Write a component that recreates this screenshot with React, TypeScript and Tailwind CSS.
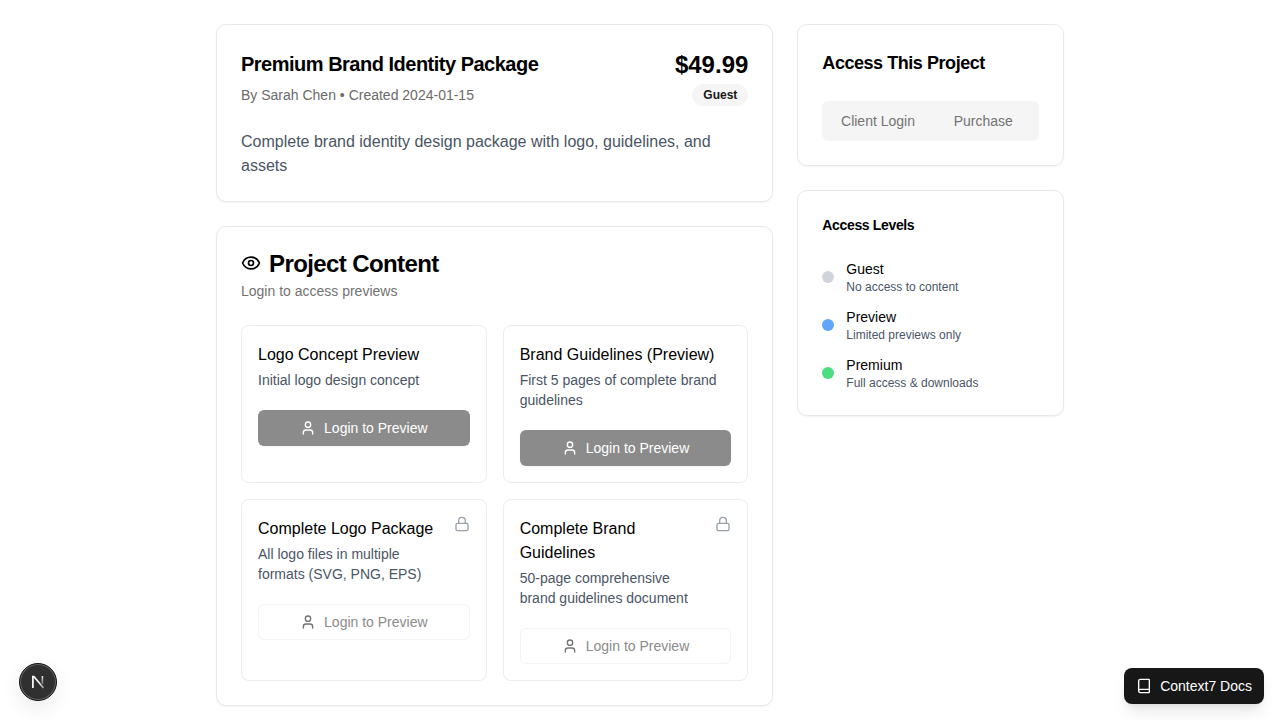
import React from 'react';
import { Book, Eye, Lock, User } from 'lucide-react';

const items = [
  { title: 'Logo Concept Preview', desc: 'Initial logo design concept', locked: false },
  { title: 'Brand Guidelines (Preview)', desc: 'First 5 pages of complete brand guidelines', locked: false },
  { title: 'Complete Logo Package', desc: 'All logo files in multiple formats (SVG, PNG, EPS)', locked: true },
  { title: 'Complete Brand Guidelines', desc: '50-page comprehensive brand guidelines document', locked: true },
];

const levels = [
  { name: 'Guest', desc: 'No access to content', dot: 'bg-[#d1d5db]' },
  { name: 'Preview', desc: 'Limited previews only', dot: 'bg-[#60a5fa]' },
  { name: 'Premium', desc: 'Full access & downloads', dot: 'bg-[#4ade80]' },
];

const ContentCard: React.FC<{ title: string; desc: string; locked: boolean }> = ({ title, desc, locked }) => (
  <div className="rounded-lg border border-[#ececec] p-4">
    <div className="flex items-start justify-between gap-2">
      <div className="flex-1">
        <h4 className="pt-px text-base leading-6 text-black">{title}</h4>
        <p className="mt-[3px] text-sm leading-5 text-[#4a5565]">{desc}</p>
      </div>
      {locked && <Lock className="h-4 w-4 shrink-0 text-[#99a1af]" />}
    </div>
    {locked ? (
      <button className="mt-5 flex h-9 w-full items-center justify-center gap-2 rounded-md border border-[#f3f3f3] bg-white text-sm text-[#8b8b8b]">
        <User className="h-4 w-4 text-[#737373]" />
        <span>Login to Preview</span>
      </button>
    ) : (
      <button className="mt-5 flex h-9 w-full items-center justify-center gap-2 rounded-md bg-[#8b8b8b] text-sm text-white shadow-[0_1px_2px_0_rgba(0,0,0,0.05)]">
        <User className="h-4 w-4" />
        <span>Login to Preview</span>
      </button>
    )}
  </div>
);

export default function App() {
  return (
    <div className="relative h-[720px] overflow-hidden bg-white font-['Liberation_Sans',Arial,sans-serif] text-black">
      <div className="mx-auto grid w-[848px] grid-cols-3 gap-6 pt-6">
        <div className="col-span-2 flex flex-col gap-6">
          {/* Project header */}
          <div className="rounded-[10px] border border-[#e8e8e8] p-6 pb-[23px] shadow-[0_1px_2px_0_rgba(0,0,0,0.05)]">
            <div className="flex items-start justify-between">
              <div>
                <h1 className="text-xl leading-[30px] font-bold tracking-tight">Premium Brand Identity Package</h1>
                <p className="mt-1.5 text-sm leading-5 text-[#6b6b6b]">By Sarah Chen • Created 2024-01-15</p>
              </div>
              <div className="flex flex-col items-end gap-[3px]">
                <div className="text-2xl leading-8 font-bold">$49.99</div>
                <span className="rounded-full bg-[#f5f5f5] px-[11px] py-[3px] text-xs leading-4 font-bold text-[#171717]">Guest</span>
              </div>
            </div>
            <p className="mt-6 text-base leading-6 text-[#4a5565]">
              Complete brand identity design package with logo, guidelines, and assets
            </p>
          </div>

          {/* Project content */}
          <div className="rounded-[10px] border border-[#e8e8e8] p-6 shadow-[0_1px_2px_0_rgba(0,0,0,0.05)]">
            <div className="flex items-center gap-2">
              <Eye className="h-5 w-5" />
              <h2 className="pt-[2px] text-2xl leading-[22px] font-bold tracking-tight">Project Content</h2>
            </div>
            <p className="mt-1.5 text-sm leading-5 text-[#737373]">Login to access previews</p>
            <div className="mt-6 grid grid-cols-2 gap-4">
              {items.map((item) => (
                <ContentCard key={item.title} {...item} />
              ))}
            </div>
          </div>
        </div>

        <div className="flex flex-col gap-6">
          {/* Access tabs */}
          <div className="rounded-[10px] border border-[#e8e8e8] p-6 shadow-[0_1px_2px_0_rgba(0,0,0,0.05)]">
            <h3 className="text-lg leading-7 font-bold tracking-tight">Access This Project</h3>
            <div className="mt-6 grid h-10 grid-cols-2 rounded-md bg-[#f5f5f5] p-[3px] text-sm text-[#737373]">
              <div className="flex items-center justify-center">Client Login</div>
              <div className="flex items-center justify-center">Purchase</div>
            </div>
          </div>

          {/* Access levels */}
          <div className="rounded-[10px] border border-[#e8e8e8] p-6 shadow-[0_1px_2px_0_rgba(0,0,0,0.05)]">
            <h3 className="text-sm leading-5 font-bold tracking-tight">Access Levels</h3>
            <div className="mt-6 flex flex-col gap-3">
              {levels.map((level) => (
                <div key={level.name} className="flex items-center gap-3">
                  <div className={`h-3 w-3 rounded-full ${level.dot}`} />
                  <div>
                    <div className="text-sm leading-5">{level.name}</div>
                    <div className="text-xs leading-4 text-[#4a5565]">{level.desc}</div>
                  </div>
                </div>
              ))}
            </div>
          </div>
        </div>
      </div>

      {/* Next dev indicator */}
      <div className="absolute bottom-[19px] left-[19px] flex h-[38px] w-[38px] items-center justify-center rounded-full border border-[#161616] bg-[#303030] shadow-[inset_0_0_0_1px_#666,0_8px_20px_rgba(0,0,0,0.08)]">
        <svg width="16" height="16" viewBox="0 0 16 16" fill="none">
          <defs>
            <linearGradient id="nStem" x1="0" y1="0" x2="0" y2="1">
              <stop offset="0" stopColor="#e5e5e5" />
              <stop offset="1" stopColor="#777" />
            </linearGradient>
            <linearGradient id="nDiag" x1="0" y1="0" x2="1" y2="1">
              <stop offset="0.5" stopColor="white" />
              <stop offset="1" stopColor="#999" />
            </linearGradient>
          </defs>
          <path d="M2.9 14V2.5h1L13.5 14" stroke="url(#nDiag)" strokeWidth="1.7" />
          <rect x="11.6" y="2" width="1.6" height="8" fill="url(#nStem)" />
        </svg>
      </div>

      {/* Docs button */}
      <div className="absolute right-4 bottom-4 flex h-9 items-center gap-2 rounded-lg bg-[#171717] px-3 text-sm text-white shadow-lg">
        <Book className="h-4 w-4" />
        <span>Context7 Docs</span>
      </div>
    </div>
  );
}
